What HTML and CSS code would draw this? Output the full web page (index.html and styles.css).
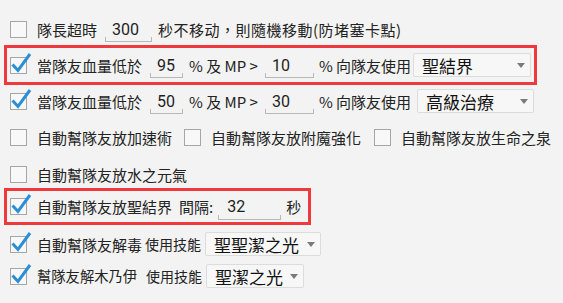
FILE: index.html
```html
<!DOCTYPE html>
<html lang="zh-Hant">
<head>
<meta charset="utf-8">
<link rel="stylesheet" href="styles.css">
</head>
<body>
<div class="panel">
  <div class="row r1">
    <svg class="cb" width="17" height="17" viewBox="0 0 17 17"><rect x="0.5" y="0.5" width="16" height="16" /></svg>
    <span class="lbl">隊長超時</span>
    <span class="num w47 ml8">300</span>
    <span class="lbl wide ml6">秒不移动，則隨機移動(防堵塞卡點)</span>
  </div>

  <div class="row hl hl-a">
    <svg class="cb" width="17" height="17" viewBox="0 0 17 17"><rect x="0.5" y="0.5" width="16" height="16" /><path class="ck" d="M2.5 7.5 L8 13.5 L20 -3" /></svg>
    <span class="lbl">當隊友血量低於</span>
    <span class="num w33 ml8">95</span>
    <span class="lbl ml6">% 及 MP &gt;</span>
    <span class="num w49 ml7">10</span>
    <span class="lbl ml5">% 向隊友使用</span>
    <span class="sel w118 ml2"><span class="sel-t">聖結界</span><span class="arrow"></span></span>
  </div>

  <div class="row r3">
    <svg class="cb" width="17" height="17" viewBox="0 0 17 17"><rect x="0.5" y="0.5" width="16" height="16" /><path class="ck" d="M2.5 7.5 L8 13.5 L20 -3" /></svg>
    <span class="lbl">當隊友血量低於</span>
    <span class="num w33 ml8">50</span>
    <span class="lbl ml6">% 及 MP &gt;</span>
    <span class="num w49 ml7">30</span>
    <span class="lbl ml5">% 向隊友使用</span>
    <span class="sel w117 ml6"><span class="sel-t">高級治療</span><span class="arrow"></span></span>
  </div>

  <div class="row r4">
    <svg class="cb" width="17" height="17" viewBox="0 0 17 17"><rect x="0.5" y="0.5" width="16" height="16" /></svg>
    <span class="lbl">自動幫隊友放加速術</span>
    <svg class="cb ml12" width="17" height="17" viewBox="0 0 17 17"><rect x="0.5" y="0.5" width="16" height="16" /></svg>
    <span class="lbl">自動幫隊友放附魔強化</span>
    <svg class="cb ml13" width="17" height="17" viewBox="0 0 17 17"><rect x="0.5" y="0.5" width="16" height="16" /></svg>
    <span class="lbl">自動幫隊友放生命之泉</span>
  </div>

  <div class="row r5">
    <svg class="cb" width="17" height="17" viewBox="0 0 17 17"><rect x="0.5" y="0.5" width="16" height="16" /></svg>
    <span class="lbl">自動幫隊友放水之元氣</span>
  </div>

  <div class="row hl hl-b">
    <svg class="cb" width="17" height="17" viewBox="0 0 17 17"><rect x="0.5" y="0.5" width="16" height="16" /><path class="ck" d="M2.5 7.5 L8 13.5 L20 -3" /></svg>
    <span class="lbl">自動幫隊友放聖結界</span>
    <span class="lbl ml7">間隔:</span>
    <span class="num w63 ml5 pl9">32</span>
    <span class="lbl ml5">秒</span>
  </div>

  <div class="row r7">
    <svg class="cb" width="17" height="17" viewBox="0 0 17 17"><rect x="0.5" y="0.5" width="16" height="16" /><path class="ck" d="M2.5 7.5 L8 13.5 L20 -3" /></svg>
    <span class="lbl">自動幫隊友解毒</span>
    <span class="lbl sm ml3">使用技能</span>
    <span class="sel w116 ml4"><span class="sel-t">聖聖潔之光</span><span class="arrow"></span></span>
  </div>

  <div class="row r8">
    <svg class="cb" width="17" height="17" viewBox="0 0 17 17"><rect x="0.5" y="0.5" width="16" height="16" /><path class="ck" d="M2.5 7.5 L8 13.5 L20 -3" /></svg>
    <span class="lbl sm8">幫隊友解木乃伊</span>
    <span class="lbl sm ml9">使用技能</span>
    <span class="sel w98 ml4"><span class="sel-t">聖潔之光</span><span class="arrow"></span></span>
  </div>
</div>
</body>
</html>
```

FILE: styles.css
```css
html, body {
  margin: 0;
  padding: 0;
}

body {
  background: #f3f3f3;
  font-family: Roboto, "Noto Sans CJK TC", sans-serif;
  color: #222;
  width: 563px;
  height: 303px;
  overflow: hidden;
}

.panel {
  padding-top: 11px;
}

.row {
  display: flex;
  align-items: center;
  height: 36px;
  padding-left: 10px;
  box-sizing: border-box;
  font-size: 15px;
  white-space: nowrap;
}

.hl {
  border: 3px solid #ee3a3d;
  margin-left: 4px;
  padding-left: 3px;
}

.hl-a {
  height: 40px;
  width: 533px;
  margin-top: -2px;
}

.r3 { margin-top: -2px; }
.r5 { margin-top: 1px; }

.hl-b {
  height: 37px;
  width: 307px;
  margin-top: -4px;
}

.r7 { margin-top: 1px; }
.r8 { margin-top: -4px; }

.cb {
  flex: none;
  overflow: visible;
  margin-right: 10px;
}

.cb rect {
  fill: #f8f8f8;
  stroke: #a6a6a6;
  stroke-width: 1;
}

.cb .ck {
  fill: none;
  stroke: #2b8fd8;
  stroke-width: 3;
  stroke-linejoin: miter;
}

.lbl {
  line-height: 1;
  font-family: "Noto Sans CJK TC", sans-serif;
}

.lbl.wide { letter-spacing: 0.5px; }
.lbl.sm { font-size: 14px; }
.lbl.sm8 { font-size: 14.3px; }

.num {
  position: relative;
  display: inline-flex;
  align-items: center;
  height: 26px;
  padding-left: 7px;
  box-sizing: border-box;
  font-family: Roboto, sans-serif;
  font-size: 16px;
  color: #1e1e1e;
  flex: none;
}

.num.pl9 { padding-left: 9px; }

.num::after {
  content: "";
  position: absolute;
  left: 0;
  right: 0;
  bottom: 0;
  height: 4px;
  border: 1px solid #b8b8b8;
  border-top: 0;
}

.sel {
  display: inline-flex;
  align-items: center;
  justify-content: space-between;
  height: 24px;
  padding: 0 5px 0 8px;
  box-sizing: border-box;
  border: 1px solid #dcdcdc;
  border-radius: 2px;
  background: #f7f7f7;
  flex: none;
}

.sel-t {
  font-family: "Noto Sans CJK TC", sans-serif;
  font-size: 17px;
  line-height: 1;
  color: #111;
}

.arrow {
  width: 0;
  height: 0;
  border-left: 4px solid transparent;
  border-right: 4px solid transparent;
  border-top: 5px solid #7a7a7a;
}

.w33 { width: 33px; }
.w47 { width: 47px; }
.w49 { width: 49px; }
.w63 { width: 63px; }
.w98 { width: 98px; }
.w116 { width: 116px; }
.w117 { width: 117px; }
.w118 { width: 118px; }

.ml2 { margin-left: 2px; }
.ml3 { margin-left: 3px; }
.ml4 { margin-left: 4px; }
.ml5 { margin-left: 5px; }
.ml6 { margin-left: 6px; }
.ml7 { margin-left: 7px; }
.ml8 { margin-left: 8px; }
.ml9 { margin-left: 9px; }
.ml12 { margin-left: 12px; }
.ml13 { margin-left: 13px; }
```
